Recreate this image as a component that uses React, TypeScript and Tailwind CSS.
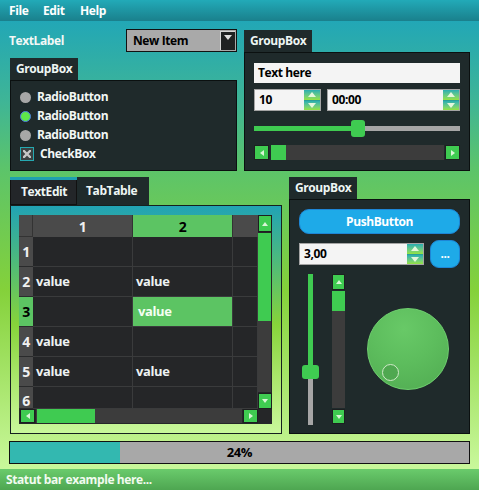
import React from "react";

type Dir = "up" | "down" | "left" | "right";

function Tri({ dir, s = 7, color = "#e4f7dc" }: { dir: Dir; s?: number; color?: string }) {
  const h = Math.round(s * 0.6);
  let w = s;
  let hh = h;
  let pts = "";
  if (dir === "up") pts = `${s / 2},0 ${s},${h} 0,${h}`;
  if (dir === "down") pts = `0,0 ${s},0 ${s / 2},${h}`;
  if (dir === "left") {
    w = h;
    hh = s;
    pts = `${h},0 ${h},${s} 0,${s / 2}`;
  }
  if (dir === "right") {
    w = h;
    hh = s;
    pts = `0,0 ${h},${s / 2} 0,${s}`;
  }
  return (
    <svg width={w} height={hh} viewBox={`0 0 ${w} ${hh}`}>
      <polygon points={pts} fill={color} />
    </svg>
  );
}

function SpinBtns() {
  return (
    <div className="w-[16px] flex flex-col">
      <div className="flex-1 flex items-center justify-center bg-linear-to-b from-[#28aeb0] to-[#95e23c]">
        <Tri dir="up" s={8} />
      </div>
      <div className="h-px bg-[#2a9f9a]" />
      <div className="flex-1 flex items-center justify-center bg-linear-to-b from-[#28aeb0] to-[#95e23c]">
        <Tri dir="down" s={8} />
      </div>
    </div>
  );
}

function SpinBox({ value, cls }: { value: string; cls: string }) {
  return (
    <div className={`flex h-[22px] border border-[#a4a4a4] bg-[#f4f4f4] ${cls}`}>
      <div className="flex-1 flex items-center pl-[4px] text-[12px] font-bold text-black leading-none">{value}</div>
      <SpinBtns />
    </div>
  );
}

function ArrowBtn({ dir, cls }: { dir: Dir; cls: string }) {
  return (
    <div className={`flex items-center justify-center bg-[#3fcb51] border border-[#1d1f20] ${cls}`}>
      <Tri dir={dir} s={6} color="#d9f5d6" />
    </div>
  );
}

function Radio({ checked, label }: { checked?: boolean; label: string }) {
  return (
    <div className="h-[18px] flex items-center">
      <div className="w-[20px] flex justify-center">
        {checked ? (
          <div className="w-[11px] h-[11px] rounded-full bg-[#5ee84a] border border-[#4b7fe0]" />
        ) : (
          <div className="w-[11px] h-[11px] rounded-full bg-[#a7a7a7]" />
        )}
      </div>
      <span className="ml-[2px] text-[12px] font-bold text-[#f2f7f5]">{label}</span>
    </div>
  );
}

function TabLabel({ text, cls }: { text: string; cls: string }) {
  return (
    <div className={`h-[22px] bg-[#1f2a2b] flex items-center pl-[6px] text-[12px] font-bold text-[#eef6f4] ${cls}`}>
      {text}
    </div>
  );
}

const cellBase = "border-r border-b border-[#3a3b3c] flex items-center text-[13px] font-bold";

function TableRow({ n, a, b, sel, last }: { n: string; a?: string; b?: string; sel?: boolean; last?: boolean }) {
  return (
    <div className={`flex shrink-0 ${last ? "h-[22px]" : "h-[30px]"}`}>
      <div
        className={`w-[14px] flex justify-center border-b border-[#2a2b2c] text-[14px] font-bold ${
          last ? "items-end leading-none" : "items-center"
        } ${sel ? "bg-[#5cc463] text-black" : "bg-[#4a4a4a] text-[#f0f0f0]"}`}
      >
        {n}
      </div>
      <div className={`w-[100px] pl-[3px] bg-[#252628] text-[#eef2f2] ${cellBase}`}>{a}</div>
      <div
        className={`w-[100px] ${sel ? "pl-[5px] bg-[#5cc463] text-[#f4fff2]" : "pl-[3px] bg-[#252628] text-[#eef2f2]"} ${cellBase}`}
      >
        {b}
      </div>
      <div className={`w-[25px] bg-[#252628] ${cellBase}`} />
    </div>
  );
}

export default function App() {
  return (
    <div className="w-[479px] h-[490px] flex flex-col overflow-hidden font-['Open_Sans',sans-serif] tracking-[-0.4px]">
      {/* Menu bar */}
      <div className="h-[21px] flex items-center bg-linear-to-b from-[#22aab8] to-[#1a808c] text-[12px] font-bold text-white">
        <span className="ml-[9px] w-[34px]">File</span>
        <span className="w-[37px]">Edit</span>
        <span>Help</span>
      </div>

      {/* Main */}
      <div className="h-[448px] flex flex-col pt-[8px] px-[9px] bg-[linear-gradient(180deg,#22a7b6_0%,#3fb596_18%,#5cc46a_33%,#84d13a_60%,#c9f89b_100%)]">
        {/* Row 1 */}
        <div className="flex items-start gap-[7px] h-[142px]">
          {/* Left column */}
          <div className="w-[228px] flex flex-col">
            <div className="h-[23px] flex items-center justify-between">
              <span className="text-[12px] font-bold text-[#f2f8f6]">TextLabel</span>
              <div className="w-[111px] h-[23px] border border-[#111] bg-[#a9a9a9] flex items-center">
                <span className="flex-1 pl-[6px] text-[12px] font-bold text-black">New Item</span>
                <div className="w-[15px] h-[19px] mr-[1px] bg-[#202223] border-l border-t border-[#d6d6d6] flex items-start justify-center pt-[3px]">
                  <Tri dir="down" s={8} color="#e0e0e0" />
                </div>
              </div>
            </div>
            <div className="ml-[1px] mt-[6px] flex flex-col">
              <TabLabel text="GroupBox" cls="w-[68px]" />
              <div className="w-[227px] h-[91px] bg-[#1f2a2b] border border-[#0b1010] flex flex-col pt-[7px] pl-[4px] gap-[1px]">
                <Radio label="RadioButton" />
                <Radio label="RadioButton" checked />
                <Radio label="RadioButton" />
                <div className="h-[18px] flex items-center">
                  <div className="ml-[5px] w-[14px] h-[14px] border border-[#25a9b1] bg-[#3b4141] flex items-center justify-center">
                    <svg width="8" height="8" viewBox="0 0 8 8">
                      <path d="M1 1 L7 7 M7 1 L1 7" stroke="#c6c6c6" strokeWidth="2.4" strokeLinecap="square" />
                    </svg>
                  </div>
                  <span className="ml-[6px] text-[12px] font-bold text-[#f2f7f5]">CheckBox</span>
                </div>
              </div>
            </div>
          </div>

          {/* Right groupbox */}
          <div className="mt-[1px] flex flex-col">
            <TabLabel text="GroupBox" cls="w-[68px]" />
            <div className="w-[226px] h-[119px] bg-[#1f2a2b] border border-[#0b1010] flex flex-col pt-[10px] px-[9px]">
              <div className="h-[20px] bg-[#f4f4f4] flex items-center pl-[4px] text-[12px] font-bold text-black">Text here</div>
              <div className="mt-[6px] flex gap-[6px]">
                <SpinBox value="10" cls="w-[67px]" />
                <SpinBox value="00:00" cls="w-[133px]" />
              </div>
              {/* slider */}
              <div className="mt-[9px] h-[17px] flex items-center">
                <div className="w-[97px] h-[5px] bg-[#3fcb51]" />
                <div className="w-[14px] h-[17px] rounded-[3px] bg-[#3fcb51]" />
                <div className="flex-1 h-[5px] bg-[#a6a6a6]" />
              </div>
              {/* hscroll */}
              <div className="mt-[8px] h-[15px] flex">
                <ArrowBtn dir="left" cls="w-[15px] h-[15px]" />
                <div className="flex-1 ml-[2px] mr-[1px] bg-[#3c3c3c] flex">
                  <div className="w-[15px] bg-[#3fcb51]" />
                </div>
                <ArrowBtn dir="right" cls="w-[15px] h-[15px]" />
              </div>
            </div>
          </div>
        </div>

        {/* Row 2 */}
        <div className="mt-[6px] flex items-start gap-[7px] h-[257px]">
          {/* Tab widget */}
          <div className="ml-[1px] w-[272px] flex flex-col">
            <div className="h-[28px] flex items-stretch">
              <div className="w-[67px] flex flex-col">
                <div className="h-[3px] bg-[#1fa0b0]" />
                <div className="flex-1 bg-[#232629] border border-t-0 border-[#111] flex items-center pl-[10px] text-[12px] font-bold text-[#eef6f4]">
                  TextEdit
                </div>
              </div>
              <div className="w-[72px] bg-[#1f2a2b] flex items-center pl-[9px] text-[12px] font-bold text-[#eef6f4]">TabTable</div>
            </div>
            <div className="h-[229px] border border-[#16201f] pt-[9px] pl-[8px] bg-[linear-gradient(180deg,#21a3b5_0%,#4fbb7a_25%,#86d33a_52%,#a9e66a_75%,#c9f89b_100%)]">
              {/* table */}
              <div className="w-[253px] h-[209px] flex flex-col bg-[#252628]">
                <div className="flex h-[194px]">
                  <div className="w-[239px] overflow-hidden flex flex-col">
                    <div className="flex h-[22px] shrink-0">
                      <div className="w-[14px] bg-[#4a4a4a] border-r border-b border-[#333]" />
                      <div className="w-[100px] bg-[#4a4a4a] border-r border-[#333] flex items-center justify-center text-[14px] font-bold text-[#f0f0f0]">1</div>
                      <div className="w-[100px] bg-[#5cc463] border-r border-[#333] flex items-center justify-center text-[14px] font-bold text-black">2</div>
                      <div className="w-[25px] bg-[#4a4a4a]" />
                    </div>
                    <TableRow n="1" />
                    <TableRow n="2" a="value" b="value" />
                    <TableRow n="3" b="value" sel />
                    <TableRow n="4" a="value" />
                    <TableRow n="5" a="value" b="value" />
                    <TableRow n="6" last />
                  </div>
                  {/* vscroll */}
                  <div className="w-[14px] flex flex-col bg-[#252628]">
                    <ArrowBtn dir="up" cls="h-[17px] w-[14px]" />
                    <div className="flex-1 bg-[#3c3c3c] flex flex-col mt-[1px] mr-[1px]">
                      <div className="h-[88px] bg-[#3fcb51]" />
                    </div>
                    <ArrowBtn dir="down" cls="h-[16px] w-[14px] mt-[1px]" />
                  </div>
                </div>
                <div className="flex h-[15px]">
                  <div className="w-[239px] flex pl-[1px] pb-[1px]">
                    <ArrowBtn dir="left" cls="w-[15px] h-[14px]" />
                    <div className="flex-1 mx-[1px] bg-[#3c3c3c] flex pl-[1px]">
                      <div className="w-[58px] bg-[#3fcb51]" />
                    </div>
                    <ArrowBtn dir="right" cls="w-[15px] h-[14px]" />
                  </div>
                  <div className="w-[14px] bg-[#252628]" />
                </div>
              </div>
            </div>
          </div>

          {/* GroupBox 2 */}
          <div className="flex flex-col">
            <TabLabel text="GroupBox" cls="w-[68px]" />
            <div className="w-[181px] h-[235px] bg-[#1f2a2b] border border-[#0b1010] flex flex-col pt-[9px] px-[9px]">
              <div className="h-[25px] rounded-[10px] bg-[#1eaae8] border border-[#1d86d6] flex items-center justify-center text-[12px] font-bold text-white">
                PushButton
              </div>
              <div className="mt-[6px] h-[28px] flex items-center justify-between">
                <SpinBox value="3,00" cls="w-[125px]" />
                <div className="w-[30px] h-[28px] rounded-[9px] bg-[#1eaae8] border border-[#1d86d6] flex items-center justify-center text-[12px] font-bold text-white">
                  ...
                </div>
              </div>
              <div className="mt-[6px] flex items-start">
                {/* vertical slider */}
                <div className="ml-[3px] w-[17px] h-[151px] flex flex-col items-center">
                  <div className="w-[5px] h-[91px] bg-[#3fcb51]" />
                  <div className="w-[17px] h-[14px] rounded-[3px] bg-[#3fcb51]" />
                  <div className="w-[5px] flex-1 bg-[#a6a6a6]" />
                </div>
                {/* vertical scroll */}
                <div className="ml-[13px] w-[13px] h-[150px] flex flex-col">
                  <ArrowBtn dir="up" cls="h-[16px] w-[13px]" />
                  <div className="flex-1 mt-[1px] mb-[1px] bg-[#3c3c3c] flex flex-col">
                    <div className="h-[20px] bg-[#3fcb51]" />
                  </div>
                  <ArrowBtn dir="down" cls="h-[15px] w-[13px]" />
                </div>
                {/* dial */}
                <div className="ml-[22px] mt-[34px] relative w-[82px] h-[82px] rounded-full border border-[#6fd06f] bg-[radial-gradient(circle_at_45%_25%,#68c967_0%,#5dbd5d_45%,#50aa51_100%)]">
                  <div className="absolute left-[14px] top-[55px] w-[17px] h-[17px] rounded-full border border-[#cfe9c8] bg-[#4fa850]" />
                </div>
              </div>
            </div>
          </div>
        </div>

        {/* Progress */}
        <div className="mt-[7px] w-[461px] h-[23px] border border-[#111] bg-[#a8a8a8] relative flex">
          <div className="w-[24%] bg-[#33b8b0]" />
          <div className="absolute inset-0 flex items-center justify-center text-[13px] font-bold text-black">24%</div>
        </div>
      </div>

      {/* Status bar */}
      <div className="h-[21px] flex items-center pl-[6px] bg-linear-to-b from-[#6acb6c] to-[#4ea651] text-[12px] font-bold text-[#f2fbf0]">
        Statut bar example here...
      </div>
    </div>
  );
}
